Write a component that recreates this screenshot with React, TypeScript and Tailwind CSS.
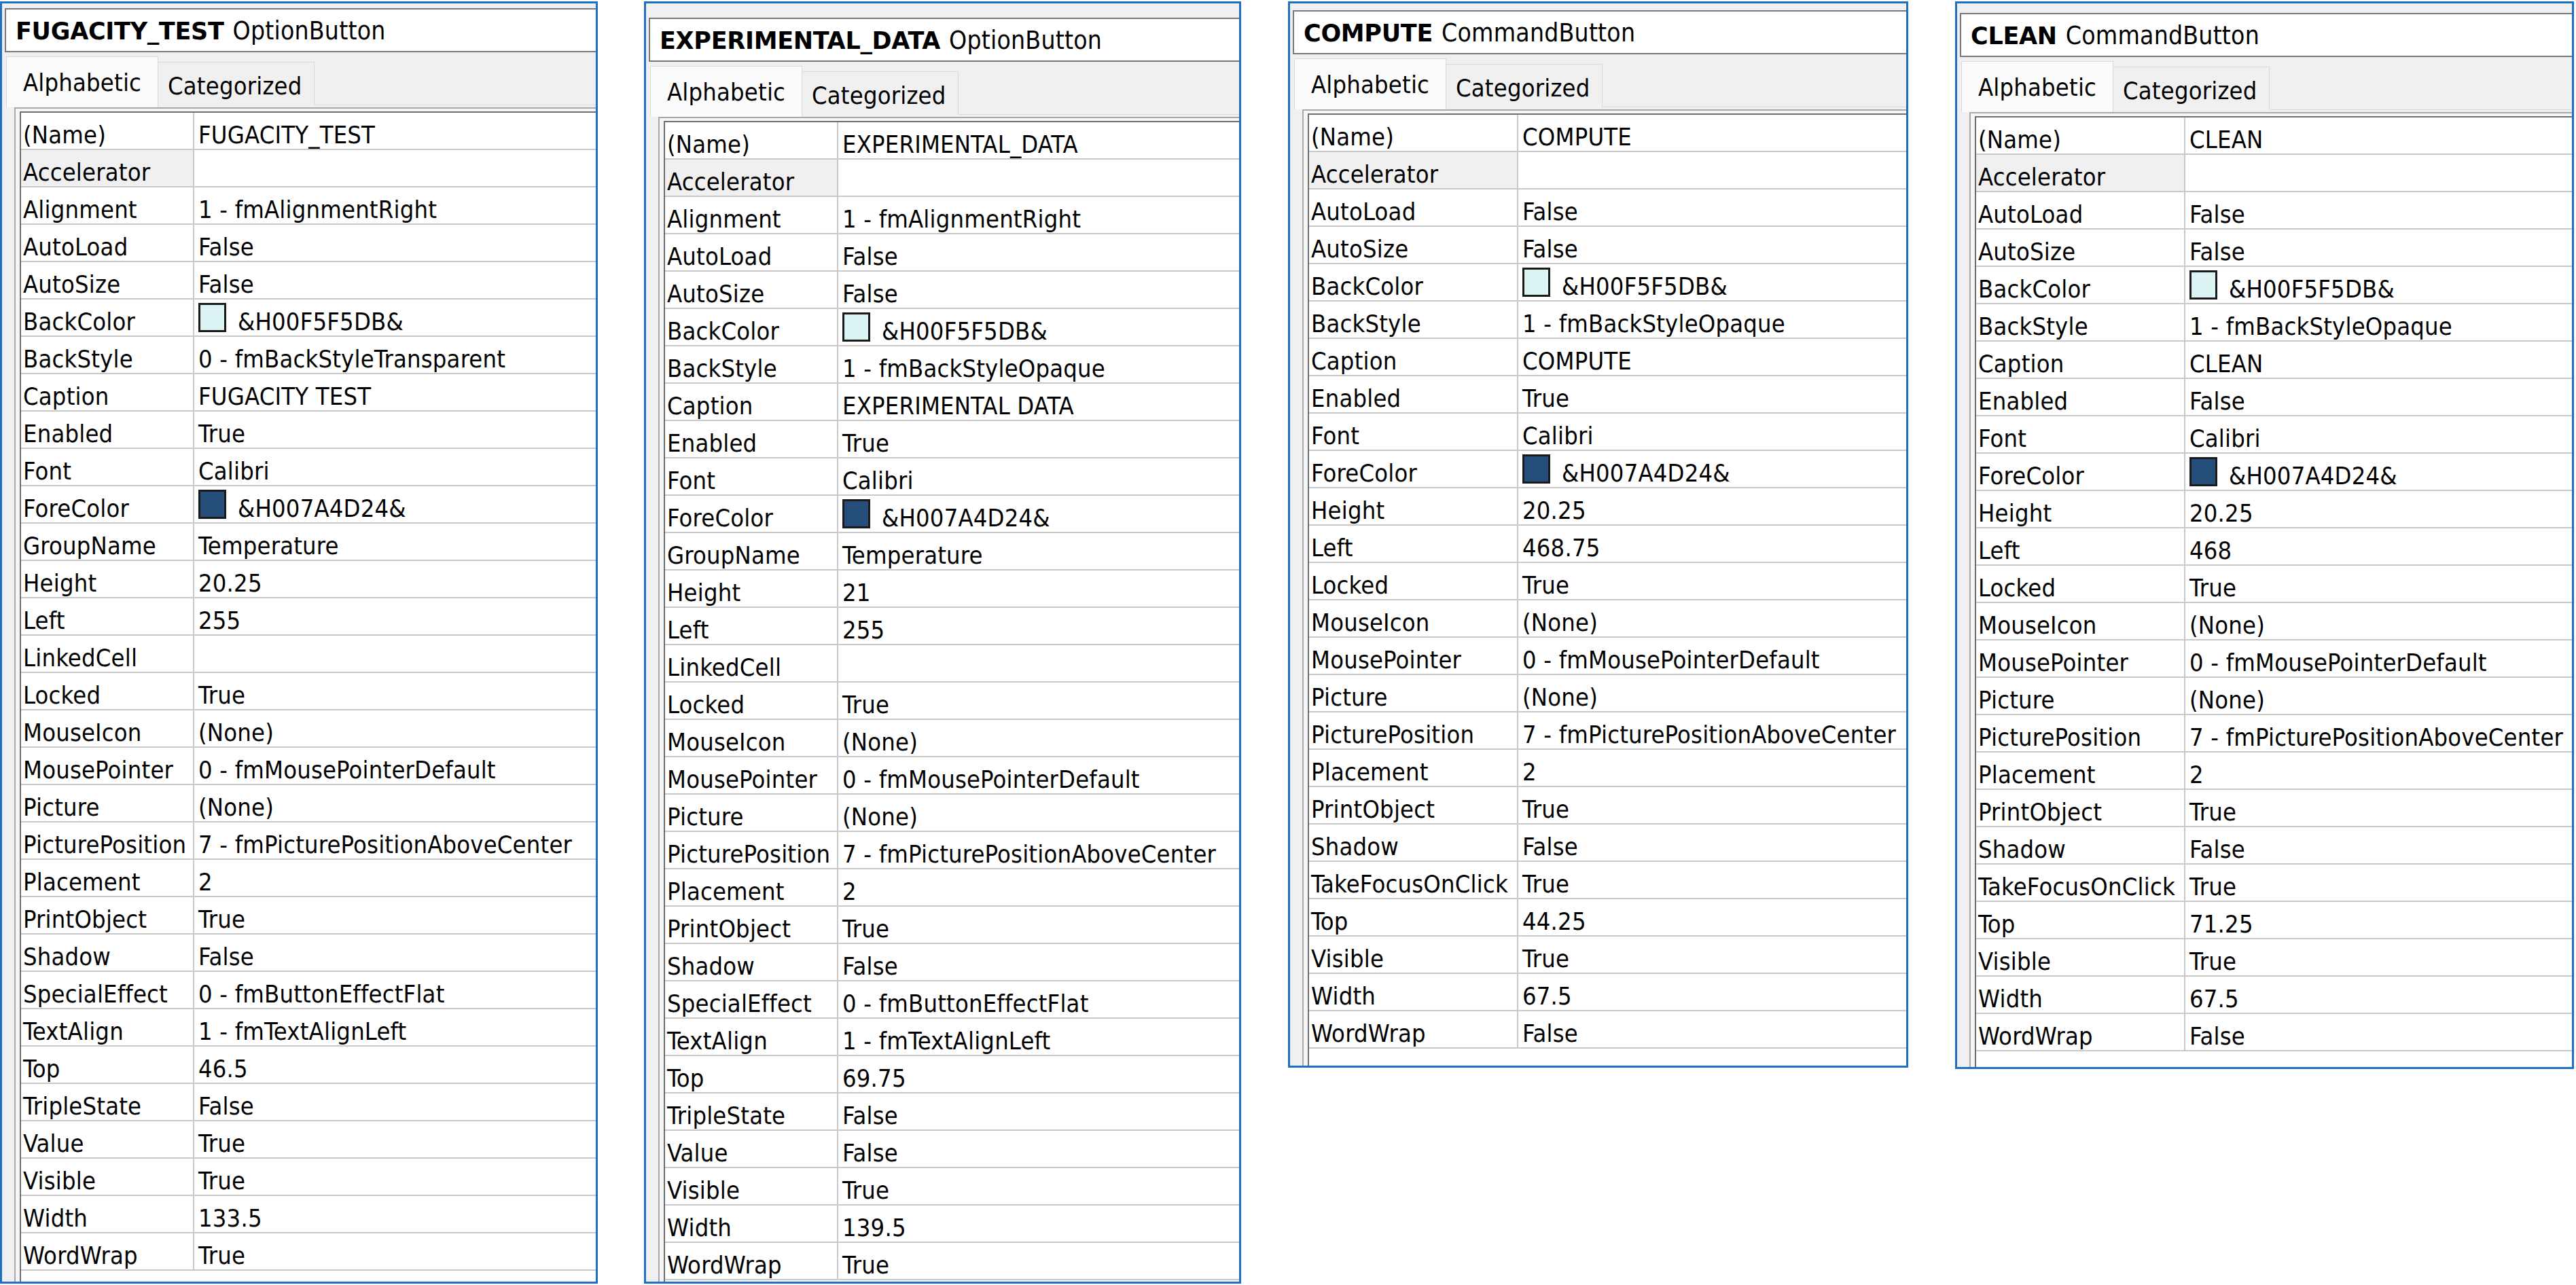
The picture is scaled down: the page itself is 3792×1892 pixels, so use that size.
import React from 'react';

type Row = { name: string; value?: string; swatch?: string; shade?: boolean };

const BACK = 'bg-[#dbf5f5]';
const FORE = 'bg-[#244d7a]';

const fugacityRows: Row[] = [
  { name: '(Name)', value: 'FUGACITY_TEST' },
  { name: 'Accelerator', shade: true },
  { name: 'Alignment', value: '1 - fmAlignmentRight' },
  { name: 'AutoLoad', value: 'False' },
  { name: 'AutoSize', value: 'False' },
  { name: 'BackColor', value: '&H00F5F5DB&', swatch: BACK },
  { name: 'BackStyle', value: '0 - fmBackStyleTransparent' },
  { name: 'Caption', value: 'FUGACITY TEST' },
  { name: 'Enabled', value: 'True' },
  { name: 'Font', value: 'Calibri' },
  { name: 'ForeColor', value: '&H007A4D24&', swatch: FORE },
  { name: 'GroupName', value: 'Temperature' },
  { name: 'Height', value: '20.25' },
  { name: 'Left', value: '255' },
  { name: 'LinkedCell' },
  { name: 'Locked', value: 'True' },
  { name: 'MouseIcon', value: '(None)' },
  { name: 'MousePointer', value: '0 - fmMousePointerDefault' },
  { name: 'Picture', value: '(None)' },
  { name: 'PicturePosition', value: '7 - fmPicturePositionAboveCenter' },
  { name: 'Placement', value: '2' },
  { name: 'PrintObject', value: 'True' },
  { name: 'Shadow', value: 'False' },
  { name: 'SpecialEffect', value: '0 - fmButtonEffectFlat' },
  { name: 'TextAlign', value: '1 - fmTextAlignLeft' },
  { name: 'Top', value: '46.5' },
  { name: 'TripleState', value: 'False' },
  { name: 'Value', value: 'True' },
  { name: 'Visible', value: 'True' },
  { name: 'Width', value: '133.5' },
  { name: 'WordWrap', value: 'True' },
];

const experimentalRows: Row[] = [
  { name: '(Name)', value: 'EXPERIMENTAL_DATA' },
  { name: 'Accelerator', shade: true },
  { name: 'Alignment', value: '1 - fmAlignmentRight' },
  { name: 'AutoLoad', value: 'False' },
  { name: 'AutoSize', value: 'False' },
  { name: 'BackColor', value: '&H00F5F5DB&', swatch: BACK },
  { name: 'BackStyle', value: '1 - fmBackStyleOpaque' },
  { name: 'Caption', value: 'EXPERIMENTAL DATA' },
  { name: 'Enabled', value: 'True' },
  { name: 'Font', value: 'Calibri' },
  { name: 'ForeColor', value: '&H007A4D24&', swatch: FORE },
  { name: 'GroupName', value: 'Temperature' },
  { name: 'Height', value: '21' },
  { name: 'Left', value: '255' },
  { name: 'LinkedCell' },
  { name: 'Locked', value: 'True' },
  { name: 'MouseIcon', value: '(None)' },
  { name: 'MousePointer', value: '0 - fmMousePointerDefault' },
  { name: 'Picture', value: '(None)' },
  { name: 'PicturePosition', value: '7 - fmPicturePositionAboveCenter' },
  { name: 'Placement', value: '2' },
  { name: 'PrintObject', value: 'True' },
  { name: 'Shadow', value: 'False' },
  { name: 'SpecialEffect', value: '0 - fmButtonEffectFlat' },
  { name: 'TextAlign', value: '1 - fmTextAlignLeft' },
  { name: 'Top', value: '69.75' },
  { name: 'TripleState', value: 'False' },
  { name: 'Value', value: 'False' },
  { name: 'Visible', value: 'True' },
  { name: 'Width', value: '139.5' },
  { name: 'WordWrap', value: 'True' },
];

const commandRows = (name: string, enabled: string, left: string, top: string): Row[] => [
  { name: '(Name)', value: name },
  { name: 'Accelerator', shade: true },
  { name: 'AutoLoad', value: 'False' },
  { name: 'AutoSize', value: 'False' },
  { name: 'BackColor', value: '&H00F5F5DB&', swatch: BACK },
  { name: 'BackStyle', value: '1 - fmBackStyleOpaque' },
  { name: 'Caption', value: name },
  { name: 'Enabled', value: enabled },
  { name: 'Font', value: 'Calibri' },
  { name: 'ForeColor', value: '&H007A4D24&', swatch: FORE },
  { name: 'Height', value: '20.25' },
  { name: 'Left', value: left },
  { name: 'Locked', value: 'True' },
  { name: 'MouseIcon', value: '(None)' },
  { name: 'MousePointer', value: '0 - fmMousePointerDefault' },
  { name: 'Picture', value: '(None)' },
  { name: 'PicturePosition', value: '7 - fmPicturePositionAboveCenter' },
  { name: 'Placement', value: '2' },
  { name: 'PrintObject', value: 'True' },
  { name: 'Shadow', value: 'False' },
  { name: 'TakeFocusOnClick', value: 'True' },
  { name: 'Top', value: top },
  { name: 'Visible', value: 'True' },
  { name: 'Width', value: '67.5' },
  { name: 'WordWrap', value: 'False' },
];

type PanelProps = {
  name: string;
  kind: string;
  rows: Row[];
  box: string; // size + outer margin
  titleTop: string;
  nameW: string;
};

const Panel: React.FC<PanelProps> = ({ name, kind, rows, box, titleTop, nameW }) => (
  <div className={`flex shrink-0 flex-col overflow-hidden border-[3px] border-[#1f70c0] bg-[#f0f0f0] ${box}`}>
    {/* object name box */}
    <div className={`ml-[4px] h-[65px] shrink-0 whitespace-nowrap border-y-2 border-l-2 border-[#787878] bg-white pl-[14px] pt-[13px] text-[37px] ${titleTop}`}>
      <span className="font-['DejaVu_Sans','Liberation_Sans',sans-serif] text-[35px] font-bold tracking-[-0.3px]">{name}</span>
      <span className="ml-[13px]">{kind}</span>
    </div>

    {/* tabs */}
    <div className="ml-[6px] mt-[6px] flex h-[75px] shrink-0 items-end">
      <div className="h-[75px] w-[224px] shrink-0 border-x border-t border-[#d9d9d9] bg-[#fbfbfb] pl-[24px] pt-[20px]">
        Alphabetic
      </div>
      <div className="mb-[3px] h-[64px] w-[230px] shrink-0 border-r border-t border-[#d9d9d9] bg-[#f0f0f0] pl-[14px] pt-[17px]">
        Categorized
      </div>
      <div className="mb-[3px] flex-1 border-b border-[#d9d9d9]" />
    </div>

    {/* property grid */}
    <div className="ml-[18px] min-h-0 flex-1 overflow-hidden border-l-2 border-t-2 border-[#a8a8a8] bg-[#f6f6f6] pl-[6px] pt-[4px]">
      <div className="h-full border-l-2 border-t-2 border-[#6e6e6e] bg-white">
        {rows.map((r) => (
          <div key={r.name} className="flex h-[55px] shrink-0 border-b-2 border-[#c9c9c9]">
            <div className={`${nameW} shrink-0 whitespace-nowrap border-r-2 border-[#c9c9c9] pl-[3px] pt-[15px] ${r.shade ? 'bg-[#f0f0f0]' : ''}`}>
              {r.name}
            </div>
            <div className="flex flex-1 items-start whitespace-nowrap pl-[6px] pt-[15px]">
              {r.swatch && (
                <span className={`-mt-[10px] mr-[17px] h-[43px] w-[41px] shrink-0 border-[3px] border-[#1a1a1a] ${r.swatch}`} />
              )}
              {r.value}
            </div>
          </div>
        ))}
      </div>
    </div>
  </div>
);

export default function App() {
  return (
    <div className="flex h-[1892px] w-[3792px] items-start overflow-hidden bg-white pt-[2px] font-['DejaVu_Sans_Condensed','Liberation_Sans',sans-serif] text-[36px] leading-none tracking-[0.2px] text-black">
      <Panel
        name="FUGACITY_TEST"
        kind="OptionButton"
        rows={fugacityRows}
        box="h-[1888px] w-[880px]"
        titleTop="mt-[7px]"
        nameW="w-[255px]"
      />
      <Panel
        name="EXPERIMENTAL_DATA"
        kind="OptionButton"
        rows={experimentalRows}
        box="ml-[68px] h-[1888px] w-[879px]"
        titleTop="mt-[21px]"
        nameW="w-[255px]"
      />
      <Panel
        name="COMPUTE"
        kind="CommandButton"
        rows={commandRows('COMPUTE', 'True', '468.75', '44.25')}
        box="ml-[69px] h-[1570px] w-[913px]"
        titleTop="mt-[10px]"
        nameW="w-[308px]"
      />
      <Panel
        name="CLEAN"
        kind="CommandButton"
        rows={commandRows('CLEAN', 'False', '468', '71.25')}
        box="ml-[69px] h-[1572px] w-[911px]"
        titleTop="mt-[14px]"
        nameW="w-[308px]"
      />
    </div>
  );
}
